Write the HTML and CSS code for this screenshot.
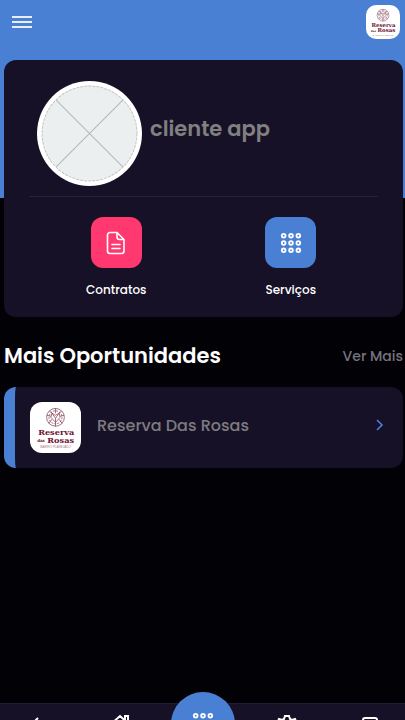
FILE: index.html
```html
<!DOCTYPE html>
<html lang="pt-BR">
<head>
    <meta charset="UTF-8">
    <meta name="viewport" content="width=device-width, initial-scale=1.0">
    <title>Reserva Das Rosas</title>
    <link rel="stylesheet" href="styles.css">
</head>
<body>
    <!-- Shared shapes -->
    <svg class="sprite" aria-hidden="true">
        <symbol id="rose" viewBox="0 0 20 20">
            <g fill="none" stroke="#8d5063" stroke-width="0.8">
                <circle cx="10" cy="10" r="8.7"/>
                <circle cx="10" cy="10" r="6.4" stroke-dasharray="2 1"/>
                <path d="M10 15l-4.500-5 1-4 3.500 2 3.500-2 1 4zM6.500 6l3.500 5 3.500-5M10 11v8M10 1v5M1.500 8l4 1M18.500 8l-4 1M3.500 16l3-4M16.500 16l-3-4M4 4l3 2M16 4l-3 2"/>
            </g>
        </symbol>
        <symbol id="dots" viewBox="0 0 24 24">
            <g fill="none" stroke="#fff" stroke-width="2">
                <circle cx="4" cy="4" r="2"/><circle cx="12" cy="4" r="2"/><circle cx="20" cy="4" r="2"/>
                <circle cx="4" cy="12" r="2"/><circle cx="12" cy="12" r="2"/><circle cx="20" cy="12" r="2"/>
                <circle cx="4" cy="20" r="2"/><circle cx="12" cy="20" r="2"/><circle cx="20" cy="20" r="2"/>
            </g>
        </symbol>
    </svg>

    <header class="header">
        <button class="menu-btn" aria-label="Menu">
            <svg width="22" height="16" viewBox="0 0 22 16" stroke="#e9effa" stroke-width="2"><path d="M1 3h20M1 8h20M1 13h20"/></svg>
        </button>
        <a href="#" class="brand" aria-label="Reserva das Rosas">
            <svg class="logo" viewBox="0 0 50 50">
                <use href="#rose" x="15" y="5" width="20" height="20"/>
                <text class="logo-name" x="8" y="32">Reserva</text>
                <text class="logo-das" x="7" y="39">das</text>
                <text class="logo-name" x="17" y="40">Rosas</text>
                <text class="logo-tag" x="10" y="45">BAIRRO PLANEJADO</text>
            </svg>
        </a>
    </header>

    <main class="content">
        <section class="card profile">
            <div class="profile-top">
                <svg class="avatar" viewBox="0 0 104 104" role="img" aria-label="Foto">
                    <circle cx="52" cy="52" r="52" fill="#fff"/>
                    <circle cx="52" cy="52" r="47" fill="#ebeff0" stroke="#c3c6c7" stroke-dasharray="3 1"/>
                    <path d="M19 19l66 66M85 19L19 85" stroke="#b5b8b9"/>
                </svg>
                <h1>cliente app</h1>
            </div>
            <div class="actions">
                <a href="#" class="action">
                    <span class="tile tile-pink">
                        <svg width="24" height="24" viewBox="0 0 24 24" fill="none" stroke="#fff" stroke-width="1.6" stroke-linecap="round" stroke-linejoin="round">
                            <path d="M13 1.500H6A2.500 2.500 0 0 0 3.500 4v16A2.500 2.500 0 0 0 6 22.500h11.500A2.500 2.500 0 0 0 20 20V8.500zM13 1.500V6a2.500 2.500 0 0 0 2.500 2.500H20M8 13.500h8M8 17.500h8"/>
                        </svg>
                    </span>
                    Contratos
                </a>
                <a href="#" class="action">
                    <span class="tile tile-blue"><svg width="22" height="22"><use href="#dots"/></svg></span>
                    Serviços
                </a>
            </div>
        </section>

        <div class="section-title">
            <h2>Mais Oportunidades</h2>
            <a href="#">Ver Mais</a>
        </div>

        <a href="#" class="card item">
            <span class="item-logo">
                <svg class="logo" viewBox="0 0 50 50">
                    <use href="#rose" x="15" y="5" width="20" height="20"/>
                    <text class="logo-name" x="8" y="32">Reserva</text>
                    <text class="logo-das" x="7" y="39">das</text>
                    <text class="logo-name" x="17" y="40">Rosas</text>
                    <text class="logo-tag" x="10" y="45">BAIRRO PLANEJADO</text>
                </svg>
            </span>
            <span class="item-name">Reserva Das Rosas</span>
            <svg class="chevron" width="8" height="12" viewBox="0 0 8 12" fill="none" stroke="#4a80d4" stroke-width="1.6"><path d="M1 1l5 5-5 5"/></svg>
        </a>
    </main>

    <nav class="bottom-nav">
        <a href="#" aria-label="Voltar">
            <svg viewBox="0 0 24 24"><path d="M13 4l-8 8 8 8M5 12h15"/></svg>
        </a>
        <a href="#" aria-label="Início">
            <svg viewBox="0 0 24 24"><path d="M2 11l10-9 10 9M17 6V2h3v7M5 9v12h14V9"/></svg>
        </a>
        <button class="nav-main" aria-label="Serviços"><svg><use href="#dots"/></svg></button>
        <a href="#" aria-label="Configurações">
            <svg viewBox="0 0 24 24"><path d="M10 2h4l1 3 2 1 3-1 2 4-2 2v2l2 2-2 4-3-1-2 1-1 3h-4l-1-3-2-1-3 1-2-4 2-2v-2L2 9l2-4 3 1 2-1z"/><circle cx="12" cy="12" r="3"/></svg>
        </a>
        <a href="#" aria-label="Mensagens">
            <svg viewBox="0 0 24 24"><rect x="5" y="4" width="14" height="16" rx="2"/></svg>
        </a>
    </nav>
</body>
</html>
```

FILE: styles.css
```css
* { box-sizing: border-box; }
body { display: flex; flex-direction: column; height: 100vh; margin: 0; overflow: hidden; background: #020106; color: #fff; font-family: Poppins, Inter, sans-serif; }
h1, h2 { margin: 0; font-weight: 600; }
a { color: inherit; text-decoration: none; }
button { padding: 0; border: none; background: none; cursor: pointer; }
svg { display: block; }
.sprite { position: absolute; width: 0; height: 0; }

.logo { width: 100%; height: 100%; }
.logo-name { font: bold 8px "DejaVu Serif", serif; fill: #6d1232; }
.logo-das { font: bold 4px "DejaVu Serif", serif; fill: #6d1232; }
.logo-tag { font: 3px "Liberation Sans", sans-serif; fill: #a77c89; }

.header { display: flex; justify-content: space-between; align-items: flex-start; height: 198px; padding: 5px 5px 0 11px; background: #4a80d4; }
.menu-btn { padding-top: 9px; }
.brand { width: 34px; height: 34px; background: #fff; border-radius: 10px; }

/* content slides over the blue header */
.content { flex: 1; margin-top: -138px; padding: 0 2px 0 4px; }
.card { background: #171127; border-radius: 12px; }
.profile { padding: 21px 25px 17px; }
.profile-top { display: flex; align-items: center; gap: 8px; padding: 0 8px 10px; border-bottom: 1px solid #2a2038; }
.profile-top h1 { padding-bottom: 9px; color: #808080; font-size: 21px; line-height: 32px; }
.avatar { width: 105px; height: 105px; }
.actions { display: grid; grid-template-columns: 1fr 1fr; padding-top: 20px; }
.action { display: flex; flex-direction: column; align-items: center; gap: 12px; font-size: 12px; line-height: 20px; font-weight: 500; }
.tile { display: grid; place-items: center; width: 51px; height: 51px; border-radius: 12px; }
.tile-pink { background: #ff396f; }
.tile-blue { background: #4a80d4; }

.section-title { display: flex; justify-content: space-between; align-items: center; padding: 23px 0 15px; }
.section-title h2 { font-size: 21px; line-height: 32px; }
.section-title a { color: #77737d; font-size: 14px; font-weight: 500; }

.item { display: flex; align-items: center; gap: 16px; padding: 15px 19px 15px 15px; border-left: 11px solid #4a80d4; }
.item-logo { width: 51px; height: 51px; background: #fff; border-radius: 12px; }
.item-name { flex: 1; padding-bottom: 4px; color: #7d7b80; font-size: 16px; font-weight: 500; }
.chevron { margin-bottom: 6px; }

.bottom-nav { display: grid; grid-template-columns: repeat(5, 1fr); justify-items: center; height: 17px; margin: 0 -7px 0 -5px; background: #171127; border-top: 1px solid #241b33; }
.bottom-nav a { padding-top: 10px; }
.bottom-nav a svg { width: 24px; height: 24px; fill: none; stroke: #fff; stroke-width: 2; }
.nav-main { display: flex; justify-content: center; width: 64px; height: 64px; margin-top: -12px; padding-top: 20px; background: #4a80d4; border-radius: 50%; }
.nav-main svg { width: 22px; height: 22px; }
```
